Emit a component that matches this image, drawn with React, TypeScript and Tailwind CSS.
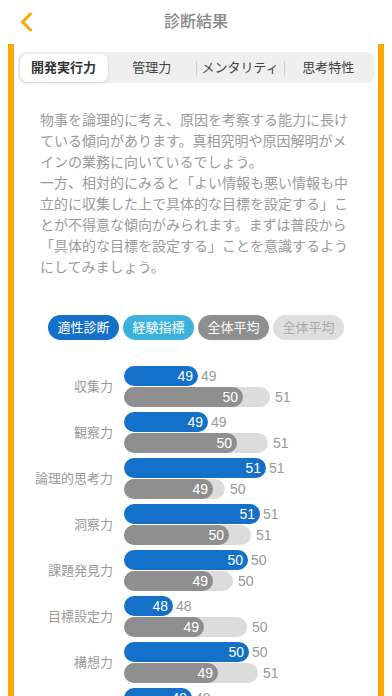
import React from 'react'

const tabs = ['開発実行力', '管理力', 'メンタリティ', '思考特性']

const lines = [
  '物事を論理的に考え、原因を考察する能力に長け',
  'ている傾向があります。真相究明や原因解明がメ',
  'インの業務に向いているでしょう。',
  '一方、相対的にみると「よい情報も悪い情報も中',
  '立的に収集した上で具体的な目標を設定する」こ',
  'とが不得意な傾向がみられます。まずは普段から',
  '「具体的な目標を設定する」ことを意識するよう',
  'にしてみましょう。',
]

// widths in px measured against the chart scale
const rows = [
  { label: '収集力', a: 49, aw: 74, b: 50, bw: 119, c: 51, cw: 146 },
  { label: '観察力', a: 49, aw: 84, b: 50, bw: 113, c: 51, cw: 144 },
  { label: '論理的思考力', a: 51, aw: 142, b: 49, bw: 89, c: 50, cw: 101 },
  { label: '洞察力', a: 51, aw: 136, b: 50, bw: 105, c: 51, cw: 127 },
  { label: '課題発見力', a: 50, aw: 124, b: 49, bw: 89, c: 50, cw: 109 },
  { label: '目標設定力', a: 48, aw: 49, b: 49, bw: 80, c: 50, cw: 123 },
  { label: '構想力', a: 50, aw: 125, b: 49, bw: 94, c: 51, cw: 134 },
  { label: '判断力', a: 49, aw: 68, b: 49, bw: 90, c: 50, cw: 120 },
]

function Header() {
  return (
    <div className="grid h-[44px] grid-cols-[60px_1fr_60px] items-center bg-white">
      <div className="pl-[20px]">
        <svg width="13" height="20" viewBox="0 0 13 20" fill="none">
          <path d="M10.5 2 L2.5 10 L10.5 18" stroke="#ffa600" strokeWidth="3" strokeLinecap="round" strokeLinejoin="round" />
        </svg>
      </div>
      <h1 className="text-center text-[16px] font-medium text-[#888888]">診断結果</h1>
      <div />
    </div>
  )
}

function Tabs() {
  return (
    <div className="mx-[4px] grid h-[31px] grid-cols-4 rounded-[8px] bg-[#efefef] p-[1.5px]">
      {tabs.map((t, i) => (
        <div key={t} className="relative flex items-center justify-center">
          {i === 0 ? (
            <div className="flex h-full w-full items-center justify-center rounded-[7px] bg-white text-[13px] font-bold text-[#333333] shadow-[0_1px_3px_rgba(0,0,0,0.15)]">
              {t}
            </div>
          ) : (
            <span className="text-[13px] text-[#444444]">{t}</span>
          )}
          {i >= 2 && <span className="absolute left-0 top-[7px] h-[15px] w-px bg-[#d0d0d0]" />}
        </div>
      ))}
    </div>
  )
}

function BarRow({ r }: { r: (typeof rows)[number] }) {
  return (
    <div className="flex items-center">
      <div className="w-[99px] text-right text-[13px] leading-[18px] text-[#999999]">{r.label}</div>
      <div className="ml-[11px] flex flex-col gap-[1px]">
        <div className="flex h-[20px] items-center">
          <div
            className="flex h-[20px] items-center justify-end rounded-full bg-[#1470c8] pr-[5px] text-[14px] leading-[20px] text-white"
            style={{ width: r.aw }}
          >
            {r.a}
          </div>
          <span className="ml-[3px] text-[14px] leading-[20px] text-[#999999]">{r.a}</span>
        </div>
        <div className="flex h-[20px] items-center">
          <div className="h-[20px] rounded-full bg-[#dcdcdc]" style={{ width: r.cw }}>
            <div
              className="flex h-full items-center justify-end rounded-full bg-[#8f8f8f] pr-[5px] text-[14px] leading-[20px] text-white"
              style={{ width: r.bw }}
            >
              {r.b}
            </div>
          </div>
          <span className="ml-[5px] text-[14px] leading-[20px] text-[#999999]">{r.c}</span>
        </div>
      </div>
    </div>
  )
}

export default function App() {
  return (
    <div
      className="h-[696px] w-[392px] overflow-hidden bg-white"
      style={{ fontFamily: '"Liberation Sans", "Noto Sans CJK JP", sans-serif' }}
    >
      <Header />
      <div className="ml-[8px] h-[652px] w-[376px] overflow-hidden border-x-[6px] border-[#ffa600] bg-white pt-[8px]">
        <Tabs />

        {/* 説明文 */}
        <p className="mt-[27px] px-[26px] text-[14px] leading-[21px] text-[#9a9a9a]">
          {lines.map((l) => (
            <span key={l} className="block whitespace-nowrap">
              {l}
            </span>
          ))}
        </p>

        {/* 凡例 */}
        <div className="mt-[37px] flex gap-[4px] pl-[34px]">
          <span className="flex h-[25px] w-[71px] items-center justify-center rounded-full bg-[#1470c8] text-[13px] text-white">適性診断</span>
          <span className="flex h-[25px] w-[71px] items-center justify-center rounded-full bg-[#3db1de] text-[13px] text-white">経験指標</span>
          <span className="flex h-[25px] w-[71px] items-center justify-center rounded-full bg-[#8f8f8f] text-[13px] text-white">全体平均</span>
          <span className="flex h-[25px] w-[71px] items-center justify-center rounded-full bg-[#dedede] text-[13px] text-[#aaaaaa]">全体平均</span>
        </div>

        {/* グラフ */}
        <div className="mt-[26px] flex flex-col gap-[5px]">
          {rows.map((r) => (
            <BarRow key={r.label} r={r} />
          ))}
        </div>
      </div>
    </div>
  )
}
